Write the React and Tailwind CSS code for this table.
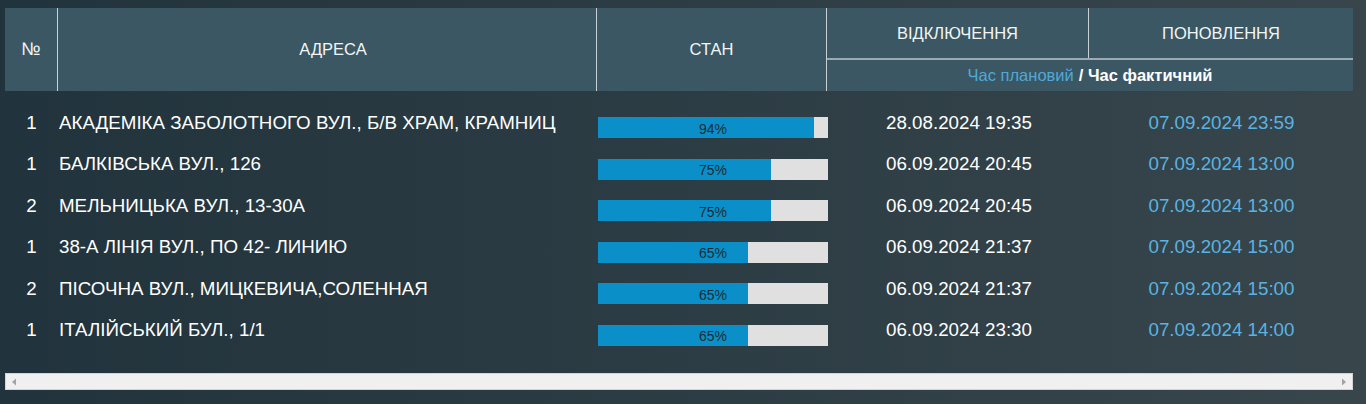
const ROWS = [
  { n: 1, addr: "АКАДЕМІКА ЗАБОЛОТНОГО ВУЛ., Б/В ХРАМ, КРАМНИЦ", pct: 94, off: "28.08.2024 19:35", on: "07.09.2024 23:59" },
  { n: 1, addr: "БАЛКІВСЬКА ВУЛ., 126", pct: 75, off: "06.09.2024 20:45", on: "07.09.2024 13:00" },
  { n: 2, addr: "МЕЛЬНИЦЬКА ВУЛ., 13-30А", pct: 75, off: "06.09.2024 20:45", on: "07.09.2024 13:00" },
  { n: 1, addr: "38-А ЛІНІЯ ВУЛ., ПО 42- ЛИНИЮ", pct: 65, off: "06.09.2024 21:37", on: "07.09.2024 15:00" },
  { n: 2, addr: "ПІСОЧНА ВУЛ., МИЦКЕВИЧА,СОЛЕННАЯ", pct: 65, off: "06.09.2024 21:37", on: "07.09.2024 15:00" },
  { n: 1, addr: "ІТАЛІЙСЬКИЙ БУЛ., 1/1", pct: 65, off: "06.09.2024 23:30", on: "07.09.2024 14:00" },
];

function Progress({ pct }) {
  return (
    <div className="relative mt-[12px] h-[21px] w-[230px] bg-[#e0e0e0]">
      <div className="h-full bg-[#0b8fc8]" style={{ width: `${pct}%` }} />
      <span className="absolute inset-0 flex items-center justify-center pt-[3px] text-[14px] text-[#1d2b33]">
        {pct}%
      </span>
    </div>
  );
}

export default function App() {
  return (
    <div
      className="h-[404px] w-full overflow-hidden bg-gradient-to-r from-[#21333c] to-[#38464c] pt-[8px]"
      style={{ fontFamily: '"Liberation Sans", Arial, sans-serif' }}
    >
      <div className="mx-[5px] w-[1348px]">
        {/* header */}
        <div className="flex h-[83px] bg-[#3b5763] text-[16.5px] text-[#f2f5f6]">
          <div className="flex w-[53px] items-center justify-center border-r border-[#c9d1d4] text-[18px]">№</div>
          <div className="flex w-[539px] items-center justify-center border-r border-[#c9d1d4] pl-[12px]">АДРЕСА</div>
          <div className="flex w-[230px] items-center justify-center border-r border-[#c9d1d4]">СТАН</div>
          <div className="flex flex-1 flex-col">
            <div className="flex h-[52px] border-b-2 border-[#9aabb2]">
              <div className="flex w-[262px] items-center justify-center border-r border-[#c9d1d4]">ВІДКЛЮЧЕННЯ</div>
              <div className="flex flex-1 items-center justify-center">ПОНОВЛЕННЯ</div>
            </div>
            <div className="flex flex-1 items-center justify-center text-[16.5px]">
              <span className="text-[#4fa9d8]">Час плановий</span>
              <span className="ml-[5px] font-bold text-white">/ Час фактичний</span>
            </div>
          </div>
        </div>

        {/* rows */}
        <div className="pt-[11px] text-[18.75px] text-white">
          {ROWS.map((r, i) => (
            <div key={i} className="flex h-[41.5px] items-center">
              <div className="w-[53px] text-center">{r.n}</div>
              <div className="w-[540px] whitespace-nowrap pl-[1px]">{r.addr}</div>
              <div className="w-[230px] self-start pt-[3px]">
                <Progress pct={r.pct} />
              </div>
              <div className="w-[262px] text-center">{r.off}</div>
              <div className="flex-1 text-center text-[#5ab3e0]">{r.on}</div>
            </div>
          ))}
        </div>

        {/* horizontal scrollbar */}
        <div className="mt-[22px] flex h-[17px] items-center justify-between border border-[#d4d4d4] bg-[#f0f0f0] px-[5px]">
          <svg width="6" height="8" viewBox="0 0 6 8" aria-hidden="true">
            <path d="M5 0.5L1 4l4 3.5z" fill="#a3a3a3" />
          </svg>
          <svg width="6" height="8" viewBox="0 0 6 8" aria-hidden="true">
            <path d="M1 0.5L5 4l-4 3.5z" fill="#a3a3a3" />
          </svg>
        </div>
      </div>
    </div>
  );
}
